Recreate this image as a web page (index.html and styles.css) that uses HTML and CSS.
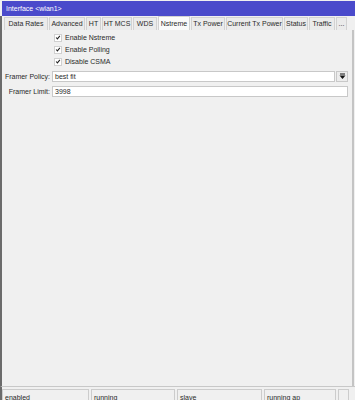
FILE: index.html
```html
<!DOCTYPE html>
<html>
<head>
<meta charset="utf-8">
<link rel="stylesheet" href="styles.css">
</head>
<body>
<div class="win">
  <div class="title">Interface &lt;wlan1&gt;</div>
  <div class="tabs">
    <div class="tab" style="width:44px">Data Rates</div>
    <div class="tab" style="width:36px">Advanced</div>
    <div class="tab" style="width:15px">HT</div>
    <div class="tab" style="width:30px">HT MCS</div>
    <div class="tab" style="width:24px">WDS</div>
    <div class="tab active" style="width:32px">Nstreme</div>
    <div class="tab" style="width:34px">Tx Power</div>
    <div class="tab" style="width:57px">Current Tx Power</div>
    <div class="tab" style="width:24px">Status</div>
    <div class="tab" style="width:26px">Traffic</div>
    <div class="tab" style="width:11px">...</div>
  </div>
  <div class="content">
    <div class="checks">
      <label class="check"><span class="box"><svg viewBox="0 0 8 8" width="8" height="8"><path d="M1.5 4 L3.2 5.8 L6.5 1.8" fill="none" stroke="#222" stroke-width="1.4"/></svg></span>Enable Nstreme</label>
      <label class="check"><span class="box"><svg viewBox="0 0 8 8" width="8" height="8"><path d="M1.5 4 L3.2 5.8 L6.5 1.8" fill="none" stroke="#222" stroke-width="1.4"/></svg></span>Enable Polling</label>
      <label class="check"><span class="box"><svg viewBox="0 0 8 8" width="8" height="8"><path d="M1.5 4 L3.2 5.8 L6.5 1.8" fill="none" stroke="#222" stroke-width="1.4"/></svg></span>Disable CSMA</label>
    </div>
    <div class="field">
      <div class="lbl">Framer Policy:</div>
      <div class="input">best fit</div>
      <div class="dd"><svg viewBox="0 0 7 7" width="7" height="7"><rect x="1" y="0.5" width="5" height="1" fill="#111"/><path d="M0.5 2.5 H6.5 L3.5 6 Z" fill="#111"/></svg></div>
    </div>
    <div class="field">
      <div class="lbl">Framer Limit:</div>
      <div class="input wide">3998</div>
    </div>
  </div>
  <div class="status">
    <div class="cell" style="width:87px">enabled</div>
    <div class="cell" style="width:84px">running</div>
    <div class="cell" style="width:85px">slave</div>
    <div class="cell" style="width:72px">running ap</div>
    <div class="cell last"></div>
  </div>
</div>
</body>
</html>
```
FILE: styles.css
```css
html, body {
  margin: 0;
  padding: 0;
  background: #f0f0f0;
}
body {
  width: 355px;
  height: 400px;
  overflow: hidden;
  font-family: "Liberation Sans", Arial, sans-serif;
  font-size: 7px;
  color: #2a2a2a;
}
.win {
  height: 400px;
  display: flex;
  flex-direction: column;
  padding-top: 1px;
  box-sizing: border-box;
}
.title {
  height: 15px;
  margin-left: 2px;
  background: #4a4acb;
  color: #fff;
  line-height: 15px;
  padding-left: 4px;
}
.tabs {
  display: flex;
  height: 14px;
  padding-left: 2px;
  border-left: 2px solid #6b6b6b;
  align-items: flex-end;
}
.tab {
  box-sizing: border-box;
  height: 13px;
  line-height: 12px;
  text-align: center;
  background: #ebebeb;
  border: 1px solid #d2d2d2;
  border-bottom: none;
  margin-right: 1px;
  white-space: nowrap;
}
.tab.active {
  height: 14px;
  background: #fafafa;
  line-height: 13px;
}
.content {
  flex: 1;
  border-left: 2px solid #6b6b6b;
  border-right: 2px solid #c4c4c4;
  margin-right: 1px;
  padding-top: 3px;
  display: flex;
  flex-direction: column;
}
.checks {
  display: flex;
  flex-direction: column;
  gap: 3px;
  padding-left: 52px;
}
.check {
  display: flex;
  align-items: center;
  height: 9px;
  gap: 3px;
}
.box {
  width: 8px;
  height: 8px;
  background: #fff;
  border: 1px solid #d0d0d0;
  box-sizing: border-box;
  display: flex;
  align-items: center;
  justify-content: center;
}
.box svg {
  width: 7px;
  height: 7px;
}
.field {
  display: flex;
  align-items: center;
  margin-top: 4px;
  height: 12px;
}
.field + .field {
  margin-top: 3px;
}
.lbl {
  width: 48px;
  text-align: right;
  padding-right: 2px;
}
.input {
  box-sizing: border-box;
  width: 283px;
  height: 11px;
  background: #fff;
  border: 1px solid #c8c8c8;
  line-height: 9px;
  padding-left: 2px;
}
.input.wide {
  width: 296px;
}
.dd {
  box-sizing: border-box;
  width: 12px;
  height: 11px;
  margin-left: 1px;
  background: #ececec;
  border: 1px solid #c8c8c8;
  display: flex;
  align-items: center;
  justify-content: center;
}
.status {
  height: 11px;
  display: flex;
  border-top: 1px solid #c8c8c8;
  border-left: 2px solid #6b6b6b;
  padding-top: 2px;
  gap: 2px;
}
.cell {
  box-sizing: border-box;
  height: 11px;
  border: 1px solid #cccccc;
  border-bottom: none;
  line-height: 15px;
  padding-left: 2px;
  white-space: nowrap;
  overflow: hidden;
}
.cell.last {
  width: 11px;
}
```
